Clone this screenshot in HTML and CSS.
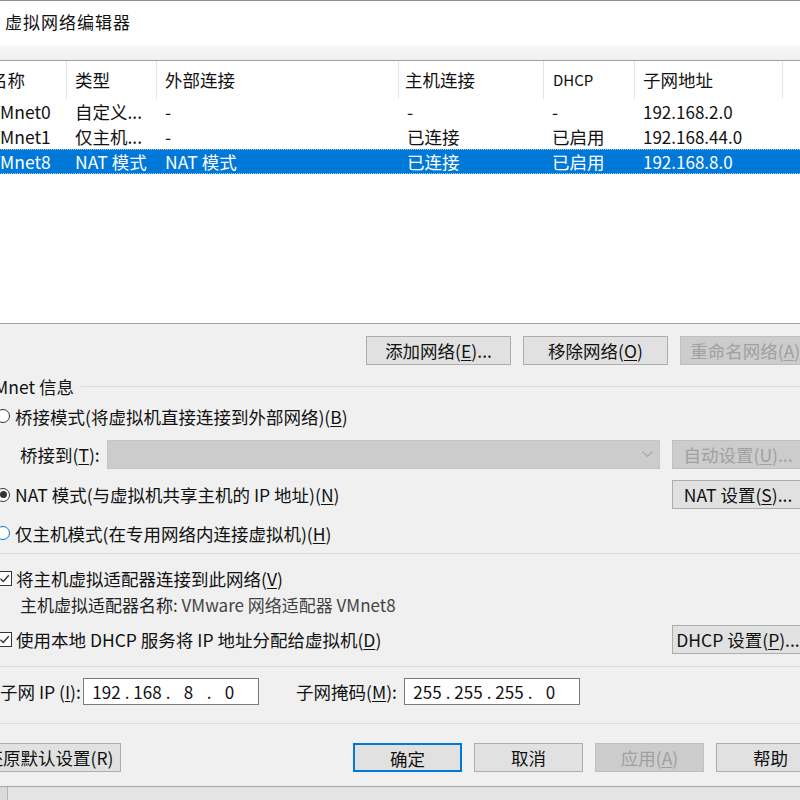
FILE: index.html
```html
<!DOCTYPE html>
<html lang="zh-CN">
<head>
  <meta charset="UTF-8">
  <meta name="viewport" content="width=device-width, initial-scale=1.0">
  <title>虚拟网络编辑器</title>
  <link rel="stylesheet" href="styles.css">
</head>
<body>

  <div class="window">
    <div class="titlebar">虚拟网络编辑器</div>

    <div class="dialog">
      <!-- Network list -->
      <div class="net-list">
        <div class="list-row list-head">
          <span>名称</span>
          <span>类型</span>
          <span>外部连接</span>
          <span>主机连接</span>
          <span class="dhcp-head">DHCP</span>
          <span>子网地址</span>
        </div>
        <div class="list-row">
          <span>VMnet0</span>
          <span>自定义...</span>
          <span>-</span>
          <span>-</span>
          <span>-</span>
          <span class="ip">192.168.2.0</span>
        </div>
        <div class="list-row">
          <span>VMnet1</span>
          <span>仅主机...</span>
          <span>-</span>
          <span>已连接</span>
          <span>已启用</span>
          <span class="ip">192.168.44.0</span>
        </div>
        <div class="list-row selected">
          <span>VMnet8</span>
          <span>NAT 模式</span>
          <span>NAT 模式</span>
          <span>已连接</span>
          <span>已启用</span>
          <span class="ip">192.168.8.0</span>
        </div>
      </div>

      <div class="net-actions">
        <button class="btn">添加网络(<u>E</u>)...</button>
        <button class="btn">移除网络(<u>O</u>)</button>
        <button class="btn" disabled>重命名网络(<u>A</u>)...</button>
      </div>

      <!-- VMnet info group -->
      <div class="group-title"><span>VMnet 信息</span></div>

      <div class="opt-row row-bridge">
        <span class="radio"></span>
        <span>桥接模式(将虚拟机直接连接到外部网络)(<u>B</u>)</span>
      </div>

      <div class="bridge-row">
        <span class="bridge-label">桥接到(<u>T</u>):</span>
        <div class="combo">
          <svg width="11" height="7" viewBox="0 0 11 7"><path d="M0.5 0.5 L5.5 5.5 L10.5 0.5" fill="none" stroke="#a8a8a8" stroke-width="1.2"/></svg>
        </div>
        <button class="btn side-btn" disabled>自动设置(<u>U</u>)...</button>
      </div>

      <div class="opt-row row-nat">
        <span class="radio checked"></span>
        <span>NAT 模式(与虚拟机共享主机的 IP 地址)(<u>N</u>)</span>
        <button class="btn side-btn">NAT 设置(<u>S</u>)...</button>
      </div>

      <div class="opt-row row-host">
        <span class="radio hover"></span>
        <span>仅主机模式(在专用网络内连接虚拟机)(<u>H</u>)</span>
      </div>

      <div class="sep sep-1"></div>

      <div class="check-row row-adapter">
        <span class="check"><svg width="13" height="13" viewBox="0 0 13 13"><path d="M2.5 6.8 L5.2 9.5 L10.8 3.2" fill="none" stroke="#333" stroke-width="1.4"/></svg></span>
        <span>将主机虚拟适配器连接到此网络(<u>V</u>)</span>
      </div>
      <div class="adapter-name">主机虚拟适配器名称: <span class="adapter-value">VMware 网络适配器 VMnet8</span></div>

      <div class="check-row row-dhcp">
        <span class="check"><svg width="13" height="13" viewBox="0 0 13 13"><path d="M2.5 6.8 L5.2 9.5 L10.8 3.2" fill="none" stroke="#333" stroke-width="1.4"/></svg></span>
        <span>使用本地 DHCP 服务将 IP 地址分配给虚拟机(<u>D</u>)</span>
        <button class="btn side-btn">DHCP 设置(<u>P</u>)...</button>
      </div>

      <div class="sep sep-2"></div>

      <div class="subnet-row">
        <span class="subnet-label">子网 IP (<u>I</u>):</span>
        <div class="ip-box">
          <span class="octet">192</span><span class="dot">.</span>
          <span class="octet">168</span><span class="dot">.</span>
          <span class="octet">8</span><span class="dot">.</span>
          <span class="octet">0</span>
        </div>
        <span class="mask-label">子网掩码(<u>M</u>):</span>
        <div class="ip-box">
          <span class="octet">255</span><span class="dot">.</span>
          <span class="octet">255</span><span class="dot">.</span>
          <span class="octet">255</span><span class="dot">.</span>
          <span class="octet">0</span>
        </div>
      </div>

      <div class="sep sep-3"></div>

      <div class="bottom-row">
        <button class="btn reset-btn">还原默认设置(R)</button>
        <div class="bottom-buttons">
          <button class="btn small-btn default">确定</button>
          <button class="btn small-btn">取消</button>
          <button class="btn small-btn" disabled>应用(<u>A</u>)</button>
          <button class="btn small-btn">帮助</button>
        </div>
      </div>
    </div>
  </div>

  <div class="behind"></div>

</body>
</html>
```

FILE: styles.css
```css
/* Global styles */
html, body {
  overflow: hidden;
}

body {
  margin: 0;
  background-color: #dadada;
  font-family: "Noto Sans CJK SC", "Noto Sans", sans-serif;
  font-size: 17.5px;
  color: #111;
}

u {
  text-decoration-thickness: 1px;
  text-underline-offset: 2px;
}

/* Window (the left edge is cut off in the screenshot) */
.window {
  width: 856px;
  margin-left: -18px;
  background-color: #f0f0f0;
  border-top: 1px solid #8f8f8f;
  border-bottom: 1px solid #a6a6a6;
}

.titlebar {
  height: 44px;
  line-height: 42px;
  padding-left: 23px;
  background-color: #fff;
  font-size: 17px;
  letter-spacing: 1px;
}

.dialog {
  padding-top: 15px;
  padding-bottom: 14px;
  background: linear-gradient(#f8f8f8, #f0f0f0 15px);
}

/* Network list */
.net-list {
  height: 262px;
  background-color: #fff;
  border-top: 1px solid #a0a0a0;
  border-bottom: 1px solid #a0a0a0;
}

.list-row {
  display: grid;
  grid-template-columns: 85px 90px 242px 145px 91px 148px;
  height: 25px;
  align-items: center;
}

.list-row span {
  padding-left: 8px;
  white-space: nowrap;
  overflow: hidden;
  line-height: 25px;
}

.list-head {
  height: 38px;
}

.list-head span {
  line-height: 38px;
  border-right: 1px solid #e5e5e5;
}

.list-head span:nth-child(4) {
  padding-left: 6px;
}

.list-head .dhcp-head {
  font-size: 15px;
  padding-left: 9px;
}

.ip {
  font-size: 17px;
}

.list-row.selected {
  background-color: #0078d7;
  color: #fff;
  outline: 1px dotted #9fcdf3;
  outline-offset: -1px;
}

/* Buttons */
.btn {
  font: inherit;
  color: #111;
  height: 29px;
  padding: 0;
  background-color: #e1e1e1;
  border: 1px solid #adadad;
  line-height: 27px;
  white-space: nowrap;
  overflow: hidden;
}

.btn:disabled {
  background-color: #cccccc;
  border-color: #bfbfbf;
  color: #a0a0a0;
}

.btn.default {
  border: 2px solid #0078d7;
}

.net-actions {
  display: flex;
  justify-content: flex-end;
  gap: 12px;
  margin-top: 12px;
  padding-right: 13px;
}

.net-actions .btn {
  width: 145px;
}

.side-btn {
  width: 132px;
  margin-left: auto;
}

/* Group box title */
.group-title {
  display: flex;
  align-items: center;
  height: 22px;
  margin-top: 10px;
  padding-left: 2px;
}

.group-title::after {
  content: "";
  flex: 1;
  border-top: 1px solid #dcdcdc;
  margin-left: 7px;
}

/* Radio rows */
.opt-row {
  display: flex;
  align-items: center;
  gap: 5px;
  padding-left: 14px;
  padding-right: 34px;
}

.row-bridge {
  height: 30px;
  margin-top: 4px;
}

.row-nat {
  height: 29px;
  margin-top: 11px;
}

.row-host {
  height: 26px;
  margin-top: 11px;
}

.radio {
  width: 12px;
  height: 12px;
  border: 1px solid #333;
  border-radius: 50%;
  background-color: #fff;
  display: flex;
  align-items: center;
  justify-content: center;
  flex-shrink: 0;
}

.radio.checked::after {
  content: "";
  width: 7px;
  height: 7px;
  border-radius: 50%;
  background-color: #333;
}

.radio.hover {
  border-color: #0078d7;
}

/* Bridge target row */
.bridge-row {
  display: flex;
  align-items: center;
  height: 29px;
  margin-top: 9px;
  padding-left: 38px;
  padding-right: 34px;
}

.bridge-label {
  width: 87px;
}

.combo {
  flex: 1;
  height: 27px;
  background-color: #cccccc;
  border: 1px solid #c4c4c4;
  display: flex;
  align-items: center;
  justify-content: flex-end;
  padding-right: 6px;
  margin-right: 12px;
}

/* Separators */
.sep {
  border-top: 1px solid #dcdcdc;
}

.sep-1 {
  margin-top: 7px;
}

.sep-2 {
  margin-top: 12px;
}

.sep-3 {
  margin-top: 18px;
}

/* Checkbox rows */
.check-row {
  display: flex;
  align-items: center;
  gap: 4px;
  padding-left: 15px;
  padding-right: 34px;
}

.row-adapter {
  height: 24px;
  margin-top: 12px;
}

.row-dhcp {
  height: 29px;
  margin-top: 9px;
}

.check {
  width: 13px;
  height: 13px;
  border: 1px solid #333;
  background-color: #fff;
  display: flex;
  flex-shrink: 0;
}

.adapter-name {
  height: 22px;
  line-height: 22px;
  margin-top: 4px;
  padding-left: 38px;
  font-size: 17px;
  color: #222;
}

.adapter-value {
  color: #444;
}

/* Subnet fields */
.subnet-row {
  display: flex;
  align-items: center;
  height: 27px;
  margin-top: 11px;
  padding-left: 18px;
}

.subnet-label {
  width: 83px;
}

.mask-label {
  width: 108px;
  margin-left: 37px;
}

.ip-box {
  width: 166px;
  height: 25px;
  background-color: #fff;
  border: 1px solid #7a7a7a;
  display: flex;
  align-items: center;
  padding-left: 8px;
  box-sizing: content-box;
  font-size: 17px;
}

.octet {
  width: 29px;
  text-align: center;
}

.dot {
  width: 12px;
  text-align: center;
}

/* Bottom buttons */
.bottom-row {
  display: flex;
  margin-top: 19px;
  padding-right: 13px;
}

.reset-btn {
  width: 143px;
  margin-left: -4px;
}

.bottom-buttons {
  display: flex;
  gap: 12px;
  margin-left: auto;
}

.small-btn {
  width: 109px;
}

/* Window behind the dialog */
.behind {
  height: 40px;
  margin-left: 7px;
  border-left: 1px solid #b4b4b4;
  background-color: #e4e4e4;
}
```
